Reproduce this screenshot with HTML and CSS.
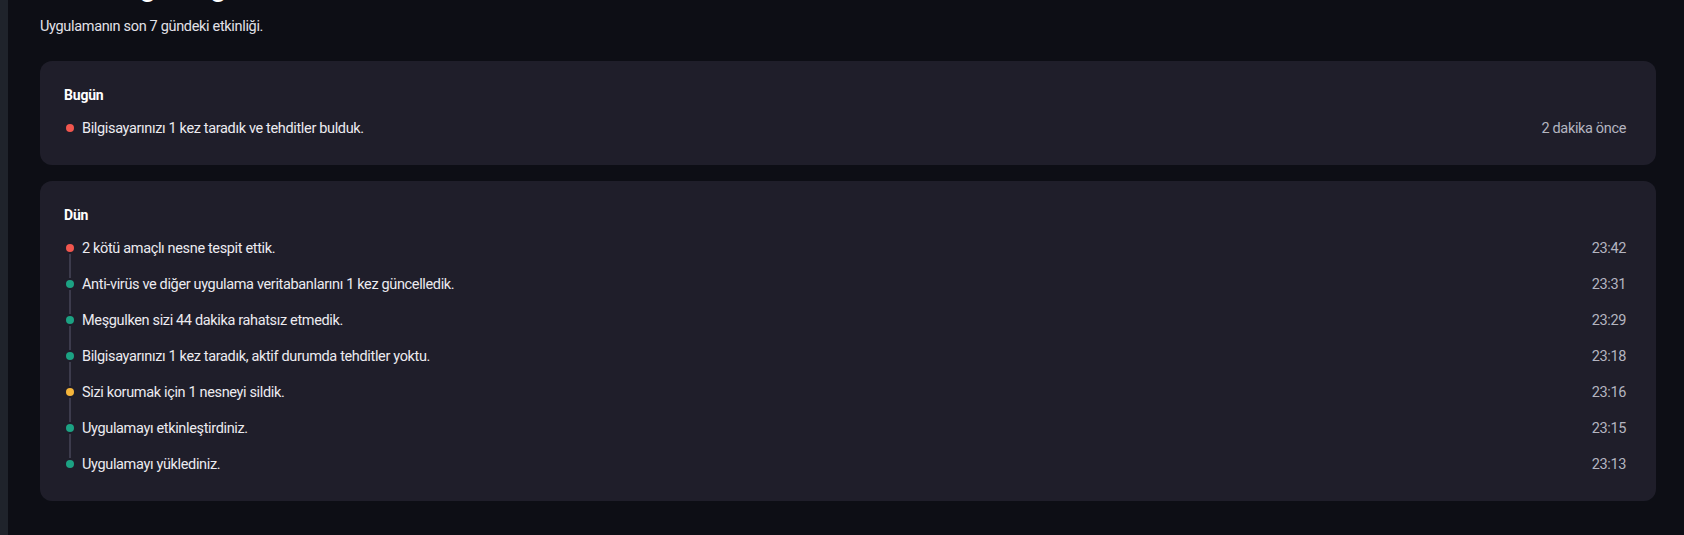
FILE: index.html
```html
<!DOCTYPE html>
<html lang="tr">
<head>
<meta charset="utf-8">
<link rel="stylesheet" href="styles.css">
</head>
<body>
<div class="app">
  <aside class="sidebar"></aside>
  <main class="content">
    <h1 class="page-title">Etkinlik günlüğü</h1>
    <p class="subtitle">Uygulamanın son 7 gündeki etkinliği.</p>

    <section class="card">
      <h2 class="card-title">Bugün</h2>
      <ul class="timeline">
        <li class="event"><span class="dot red"></span><span class="event-text">Bilgisayarınızı 1 kez taradık ve tehditler bulduk.</span><span class="event-time">2 dakika önce</span></li>
      </ul>
    </section>

    <section class="card">
      <h2 class="card-title">Dün</h2>
      <ul class="timeline">
        <li class="event"><span class="dot red"></span><span class="event-text">2 kötü amaçlı nesne tespit ettik.</span><span class="event-time">23:42</span></li>
        <li class="event"><span class="dot green"></span><span class="event-text">Anti-virüs ve diğer uygulama veritabanlarını 1 kez güncelledik.</span><span class="event-time">23:31</span></li>
        <li class="event"><span class="dot green"></span><span class="event-text">Meşgulken sizi 44 dakika rahatsız etmedik.</span><span class="event-time">23:29</span></li>
        <li class="event"><span class="dot green"></span><span class="event-text">Bilgisayarınızı 1 kez taradık, aktif durumda tehditler yoktu.</span><span class="event-time">23:18</span></li>
        <li class="event"><span class="dot yellow"></span><span class="event-text">Sizi korumak için 1 nesneyi sildik.</span><span class="event-time">23:16</span></li>
        <li class="event"><span class="dot green"></span><span class="event-text">Uygulamayı etkinleştirdiniz.</span><span class="event-time">23:15</span></li>
        <li class="event"><span class="dot green"></span><span class="event-text">Uygulamayı yüklediniz.</span><span class="event-time">23:13</span></li>
      </ul>
    </section>
  </main>
</div>
</body>
</html>
```

FILE: styles.css
```css
* { box-sizing: border-box; }
html, body {
  margin: 0;
  padding: 0;
  height: 100%;
  overflow: hidden;
  background: #0d0e15;
}
body {
  font-family: Roboto, Inter, "Noto Sans", sans-serif;
  color: #ecebf0;
  font-size: 14.5px;
  letter-spacing: -0.35px;
}
.app {
  display: flex;
  min-height: 100%;
}
.sidebar {
  width: 8px;
  flex: none;
  background: #1f232b;
}
.content {
  flex: 1;
  padding: 0 28px 0 32px;
}
.page-title {
  margin: -30px 0 13px 0;
  font-size: 28px;
  line-height: 34px;
  font-weight: 700;
  color: #ffffff;
  letter-spacing: 0;
}
.subtitle {
  margin: 0 0 24px 0;
  font-size: 14.5px;
  line-height: 20px;
  color: #e2e1e8;
  letter-spacing: -0.33px;
}
.card {
  background: #1f1e2a;
  border-radius: 12px;
  padding: 24px 30px 27px 24px;
  margin-bottom: 16px;
}
.card-title {
  margin: 0 0 13px 0;
  font-size: 14px;
  line-height: 20px;
  font-weight: 700;
  color: #ffffff;
  letter-spacing: -0.2px;
}
.timeline {
  list-style: none;
  margin: 0;
  padding: 0;
  display: flex;
  flex-direction: column;
  gap: 16px;
}
.event {
  position: relative;
  display: flex;
  align-items: center;
  height: 20px;
  padding-left: 18px;
}
.event + .event::before {
  content: "";
  position: absolute;
  left: 5px;
  top: -20px;
  width: 2px;
  height: 24px;
  background: #3c3b4c;
}
.dot {
  position: absolute;
  left: 2px;
  top: 6px;
  width: 8px;
  height: 8px;
  border-radius: 50%;
}
.dot.red { background: #f1564e; }
.dot.green { background: #1ca283; }
.dot.yellow { background: #f5b53b; }
.event-text {
  flex: 1;
  color: #ecebf0;
}
.event-time {
  color: #b4b5c0;
}
```
